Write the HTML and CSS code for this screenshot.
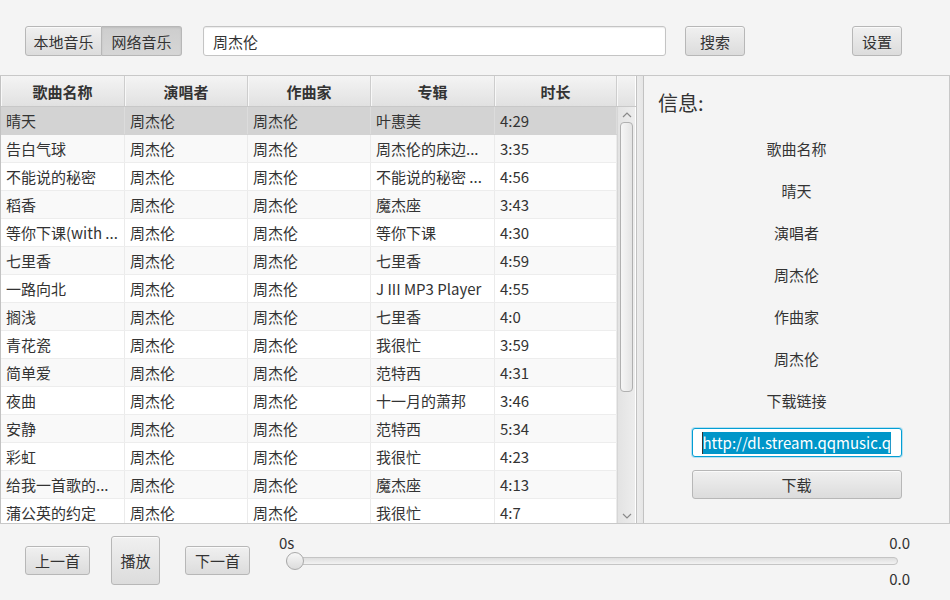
FILE: index.html
```html
<!DOCTYPE html>
<html lang="zh">
<head>
<meta charset="utf-8">
<title>音乐</title>
<link rel="stylesheet" href="styles.css">
</head>
<body>
<div class="app">
  <div class="toolbar">
    <div class="toggle">
      <button class="btn tg tg-left">本地音乐</button>
      <button class="btn tg tg-right on">网络音乐</button>
    </div>
    <div class="search">周杰伦</div>
    <button class="btn btn-search">搜索</button>
    <button class="btn btn-settings">设置</button>
  </div>

  <div class="split">
    <div class="table">
      <div class="thead">
        <div class="th c1">歌曲名称</div>
        <div class="th c2">演唱者</div>
        <div class="th c3">作曲家</div>
        <div class="th c4">专辑</div>
        <div class="th c5">时长</div>
        <div class="th filler"></div>
      </div>
      <div class="tbody">
        <div class="rows">
          <div class="tr sel"><div class="td c1">晴天</div><div class="td c2">周杰伦</div><div class="td c3">周杰伦</div><div class="td c4">叶惠美</div><div class="td c5">4:29</div></div>
          <div class="tr odd"><div class="td c1">告白气球</div><div class="td c2">周杰伦</div><div class="td c3">周杰伦</div><div class="td c4">周杰伦的床边...</div><div class="td c5">3:35</div></div>
          <div class="tr"><div class="td c1">不能说的秘密</div><div class="td c2">周杰伦</div><div class="td c3">周杰伦</div><div class="td c4">不能说的秘密 ...</div><div class="td c5">4:56</div></div>
          <div class="tr odd"><div class="td c1">稻香</div><div class="td c2">周杰伦</div><div class="td c3">周杰伦</div><div class="td c4">魔杰座</div><div class="td c5">3:43</div></div>
          <div class="tr"><div class="td c1">等你下课(with ...</div><div class="td c2">周杰伦</div><div class="td c3">周杰伦</div><div class="td c4">等你下课</div><div class="td c5">4:30</div></div>
          <div class="tr odd"><div class="td c1">七里香</div><div class="td c2">周杰伦</div><div class="td c3">周杰伦</div><div class="td c4">七里香</div><div class="td c5">4:59</div></div>
          <div class="tr"><div class="td c1">一路向北</div><div class="td c2">周杰伦</div><div class="td c3">周杰伦</div><div class="td c4">J III MP3 Player</div><div class="td c5">4:55</div></div>
          <div class="tr odd"><div class="td c1">搁浅</div><div class="td c2">周杰伦</div><div class="td c3">周杰伦</div><div class="td c4">七里香</div><div class="td c5">4:0</div></div>
          <div class="tr"><div class="td c1">青花瓷</div><div class="td c2">周杰伦</div><div class="td c3">周杰伦</div><div class="td c4">我很忙</div><div class="td c5">3:59</div></div>
          <div class="tr odd"><div class="td c1">简单爱</div><div class="td c2">周杰伦</div><div class="td c3">周杰伦</div><div class="td c4">范特西</div><div class="td c5">4:31</div></div>
          <div class="tr"><div class="td c1">夜曲</div><div class="td c2">周杰伦</div><div class="td c3">周杰伦</div><div class="td c4">十一月的萧邦</div><div class="td c5">3:46</div></div>
          <div class="tr odd"><div class="td c1">安静</div><div class="td c2">周杰伦</div><div class="td c3">周杰伦</div><div class="td c4">范特西</div><div class="td c5">5:34</div></div>
          <div class="tr"><div class="td c1">彩虹</div><div class="td c2">周杰伦</div><div class="td c3">周杰伦</div><div class="td c4">我很忙</div><div class="td c5">4:23</div></div>
          <div class="tr odd"><div class="td c1">给我一首歌的...</div><div class="td c2">周杰伦</div><div class="td c3">周杰伦</div><div class="td c4">魔杰座</div><div class="td c5">4:13</div></div>
          <div class="tr"><div class="td c1">蒲公英的约定</div><div class="td c2">周杰伦</div><div class="td c3">周杰伦</div><div class="td c4">我很忙</div><div class="td c5">4:7</div></div>
        </div>
        <div class="vscroll">
          <div class="arrow"><svg width="10" height="6" viewBox="0 0 10 6"><path d="M1 5 L5 1 L9 5" fill="none" stroke="#8a8a8a" stroke-width="1.2"/></svg></div>
          <div class="thumb"></div>
          <div class="track-rest"></div>
          <div class="arrow"><svg width="10" height="6" viewBox="0 0 10 6"><path d="M1 1 L5 5 L9 1" fill="none" stroke="#8a8a8a" stroke-width="1.2"/></svg></div>
        </div>
      </div>
    </div>
    <div class="divider"></div>
    <div class="info">
      <div class="info-title">信息:</div>
      <div class="info-body">
        <div class="lbl">歌曲名称</div>
        <div class="lbl">晴天</div>
        <div class="lbl">演唱者</div>
        <div class="lbl">周杰伦</div>
        <div class="lbl">作曲家</div>
        <div class="lbl">周杰伦</div>
        <div class="lbl">下载链接</div>
        <div class="link-field"><div class="link-inner"><span class="caret"></span><span class="selected">http://dl.stream.qqmusic.q</span></div></div>
        <button class="btn btn-download">下载</button>
      </div>
    </div>
  </div>

  <div class="player">
    <button class="btn btn-prev">上一首</button>
    <button class="btn btn-play">播放</button>
    <button class="btn btn-next">下一首</button>
    <div class="progress">
      <div class="prow"><span>0s</span><span>0.0</span></div>
      <div class="slider"><div class="strack"></div><div class="sthumb"></div></div>
      <div class="prow end"><span>0.0</span></div>
    </div>
  </div>
</div>
</body>
</html>
```

FILE: styles.css
```css
* { box-sizing: border-box; }

body {
  margin: 0;
  width: 950px;
  height: 600px;
  overflow: hidden;
  background: #f4f4f4;
  font-family: "Noto Sans CJK SC", "Noto Sans", sans-serif;
  font-size: 15px;
  color: #333;
}

.app { display: flex; flex-direction: column; height: 600px; }

/* buttons */
.btn {
  font: inherit;
  color: #333;
  height: 30px;
  padding: 0;
  border: 1px solid #b7b7b7;
  border-radius: 3px;
  background: linear-gradient(#f0f0f0, #dcdcdc);
  box-shadow: inset 0 1px 0 #fafafa;
  display: flex;
  align-items: center;
  justify-content: center;
  line-height: 1;
}

/* toolbar */
.toolbar {
  height: 75px;
  flex: none;
  display: flex;
  align-items: flex-start;
  padding: 26px 0 0 25px;
}
.toggle { display: flex; }
.tg-left { width: 77px; border-radius: 3px 0 0 3px; }
.tg-right { width: 80px; border-radius: 0 3px 3px 0; border-left: none; }
.tg.on {
  background: linear-gradient(#cdcdcd, #d6d6d6);
  box-shadow: inset 0 1px 2px #bdbdbd;
}
.search {
  margin-left: 21px;
  width: 463px;
  height: 30px;
  background: #fff;
  border: 1px solid #c4c4c4;
  border-radius: 3px;
  box-shadow: inset 0 1px 1px #ececec;
  padding-left: 9px;
  display: flex;
  align-items: center;
}
.btn-search { margin-left: 19px; width: 60px; }
.btn-settings { margin-left: 107px; width: 50px; }

/* split */
.split {
  flex: none;
  height: 449px;
  display: flex;
  border-top: 1px solid #c8c8c8;
  border-bottom: 1px solid #c8c8c8;
}
.table {
  width: 637px;
  flex: none;
  display: flex;
  flex-direction: column;
  border-left: 1px solid #c2c2c2;
  border-right: 1px solid #c2c2c2;
  background: #fff;
  overflow: hidden;
}
.thead {
  flex: none;
  display: flex;
  height: 31px;
  border-bottom: 1px solid #c8c8c8;
}
.th {
  height: 30px;
  background: linear-gradient(#f4f4f4, #e1e1e1);
  border-right: 1px solid #cdcdcd;
  box-shadow: inset 1px 0 0 #f8f8f8;
  font-weight: bold;
  display: flex;
  align-items: center;
  justify-content: center;
}
.c1 { width: 124px; }
.c2 { width: 123px; }
.c3 { width: 123px; }
.c4 { width: 124px; }
.c5 { width: 122px; }
.th.filler { width: 18px; border-right: none; }

.tbody { flex: 1; display: flex; min-height: 0; }
.rows { width: 616px; flex: none; overflow: hidden; }
.tr {
  display: flex;
  height: 28px;
  background: #fff;
  border-bottom: 1px solid #ededed;
}
.tr.odd { background: #f9f9f9; }
.tr.sel { background: #d3d3d3; border-bottom-color: #d3d3d3; }
.td {
  height: 27px;
  padding-left: 5px;
  border-right: 1px solid #ebebeb;
  display: flex;
  align-items: center;
  white-space: nowrap;
  overflow: hidden;
}
.tr.sel .td { border-right-color: #dcdcdc; }

.vscroll {
  width: 18px;
  flex: none;
  display: flex;
  flex-direction: column;
  background: linear-gradient(to right, #e3e3e3, #ededed);
  border-left: 1px solid #d6d6d6;
}
.arrow {
  height: 15px;
  flex: none;
  display: flex;
  align-items: center;
  justify-content: center;
}
.thumb {
  flex: none;
  height: 270px;
  margin: 0 2px;
  border: 1px solid #b0b0b0;
  border-radius: 4px;
  background: linear-gradient(to right, #f6f6f6, #e4e4e4);
}
.track-rest { flex: 1; }

.divider {
  width: 6px;
  flex: none;
  background: linear-gradient(to right, #ececec, #e6e6e6);
}

/* info panel */
.info {
  flex: 1;
  border-left: 1px solid #c2c2c2;
  border-right: 1px solid #c8c8c8;
  padding: 13px 0 0 14px;
}
.info-title { font-size: 20px; line-height: 28px; }
.info-body {
  display: flex;
  flex-direction: column;
  align-items: center;
  gap: 22px;
  margin-left: -14px;
  margin-top: 22px;
}
.lbl { line-height: 20px; }
.link-field {
  margin-top: -5px;
  width: 210px;
  height: 29px;
  background: #fff;
  border: 1px solid #039ed3;
  border-radius: 3px;
  box-shadow: 0 0 0 1px #b4e0f2;
  padding: 2px 9px 2px 9px;
}
.link-inner {
  height: 23px;
  overflow: hidden;
  white-space: nowrap;
  display: flex;
  align-items: center;
}
.caret { width: 1px; height: 22px; background: #333; flex: none; }
.selected {
  background: #0096c9;
  color: #fff;
  line-height: 22px;
  height: 22px;
}
.btn-download { margin-top: -9px; width: 210px; height: 29px; }

/* player */
.player {
  flex: 1;
  display: flex;
  align-items: center;
  padding: 0 0 3px 25px;
}
.btn-prev { width: 65px; height: 29px; }
.btn-play { margin-left: 21px; width: 49px; height: 49px; }
.btn-next { margin-left: 25px; width: 65px; height: 29px; }
.progress {
  margin-left: 29px;
  width: 631px;
  display: flex;
  flex-direction: column;
}
.prow {
  height: 18px;
  line-height: 18px;
  display: flex;
  justify-content: space-between;
}
.prow.end { justify-content: flex-end; }
.slider {
  position: relative;
  height: 18px;
  margin: 0 12px 0 7px;
  display: flex;
  align-items: center;
}
.strack {
  width: 100%;
  height: 8px;
  border: 1px solid #c4c4c4;
  border-radius: 4px;
  background: linear-gradient(#dedede, #f2f2f2);
}
.sthumb {
  position: absolute;
  left: 0;
  top: 0;
  width: 18px;
  height: 18px;
  border-radius: 50%;
  border: 1px solid #a9a9a9;
  background: linear-gradient(#f7f7f7, #dcdcdc);
}
```
